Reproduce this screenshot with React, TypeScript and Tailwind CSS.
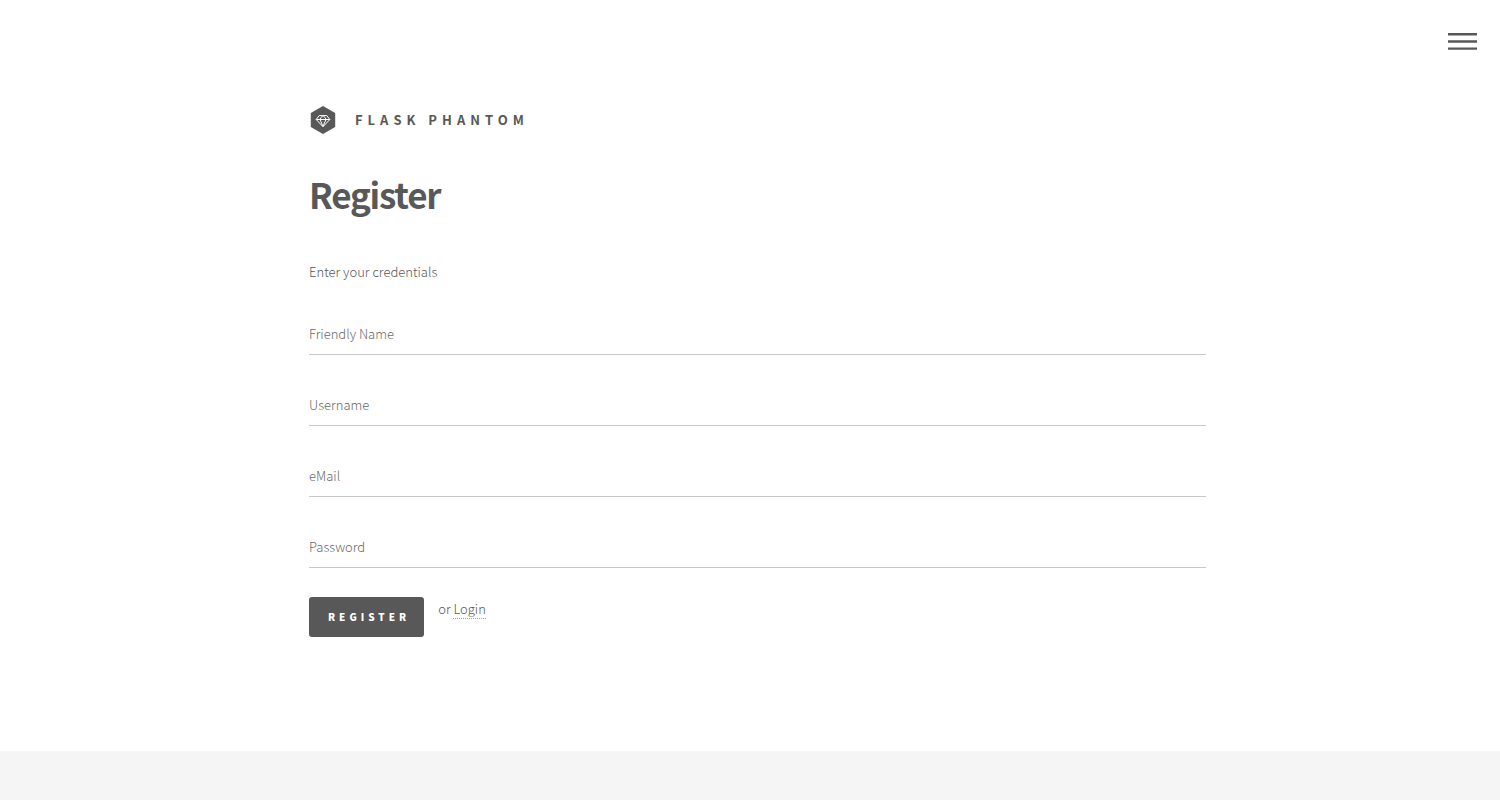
import type { ReactNode } from 'react';

type FieldProps = { id: string; label: string; type?: string };

const fields: FieldProps[] = [
  { id: 'name', label: 'Friendly Name' },
  { id: 'username', label: 'Username' },
  { id: 'email', label: 'eMail', type: 'email' },
  { id: 'password', label: 'Password', type: 'password' },
];

function Field({ id, label, type = 'text' }: FieldProps) {
  return (
    <input
      id={id}
      name={id}
      type={type}
      aria-label={label}
      placeholder={label}
      className="block h-10 w-full border-b border-[#c9c9c9] bg-transparent p-0 pb-0.5 font-light text-[#585858] outline-none placeholder:text-[#585858] placeholder:opacity-90 focus:border-[#f2849e]"
    />
  );
}

function Logo() {
  return (
    <svg viewBox="0 0 26 28" className="h-7 w-[26px]" aria-hidden="true">
      <path d="M13 0 25.2 7v14L13 28 .8 21V7Z" fill="#585858" />
      <g fill="none" stroke="#fff" strokeWidth="1" strokeLinejoin="round">
        <path d="M9.2 9.6h7.6l3 3.9-6.8 7.2-6.8-7.2Z" />
        <path d="M6.2 13.5h13.6M10 13.5l3 6.8 3-6.8M10 13.5l.8-1.8 2.2-2.1 2.2 2.1.8 1.8" />
      </g>
    </svg>
  );
}

function Container({ children }: { children: ReactNode }) {
  return (
    <div className="pr-[25px] pl-10">
      <div className="mx-auto max-w-[897px]">{children}</div>
    </div>
  );
}

export default function App() {
  return (
    <div className="flex min-h-screen flex-col bg-white font-['Noto_Sans_CJK_JP','Noto_Sans',sans-serif] text-[13px] leading-6 font-light text-[#585858]">
      <nav className="flex justify-end pt-8 pr-[23px]">
        <button type="button" aria-label="Menu" className="h-5">
          <svg viewBox="0 0 29 20" className="h-5 w-[29px]" aria-hidden="true">
            <path d="M0 2.2h29M0 9.5h29M0 16.6h29" stroke="#585858" strokeWidth="2.4" />
          </svg>
        </button>
      </nav>
      <main className="pb-[114px]">
        <Container>
          <header className="flex pt-[54px]">
            <a href="#" className="flex h-7 items-center gap-[19px] pl-px text-[13px] font-bold tracking-[5px] uppercase">
              <Logo />
              <span>Flask Phantom</span>
            </a>
          </header>
          <h1 className="mt-[34px] text-[35px] leading-[52px] font-bold tracking-[-0.035em]">Register</h1>
          <p className="mt-10">Enter your credentials</p>
          <form className="mt-[31px]" onSubmit={(event) => event.preventDefault()}>
            <div className="flex flex-col gap-[31px]">
              {fields.map((field) => (
                <Field key={field.id} {...field} />
              ))}
            </div>
            <div className="mt-[29px] flex items-start gap-[14px]">
              <button type="submit" className="h-10 rounded-[3px] bg-[#585858] pr-[14px] pl-[19px] text-[10px] font-black tracking-[4px] text-white uppercase">
                Register
              </button>
              <p>
                or <a href="#login" className="inline-block border-b border-dotted border-[#a0a0a0] leading-[18px]">Login</a>
              </p>
            </div>
          </form>
        </Container>
      </main>
      <footer className="min-h-[49px] grow bg-[#f5f5f5]" />
    </div>
  );
}
